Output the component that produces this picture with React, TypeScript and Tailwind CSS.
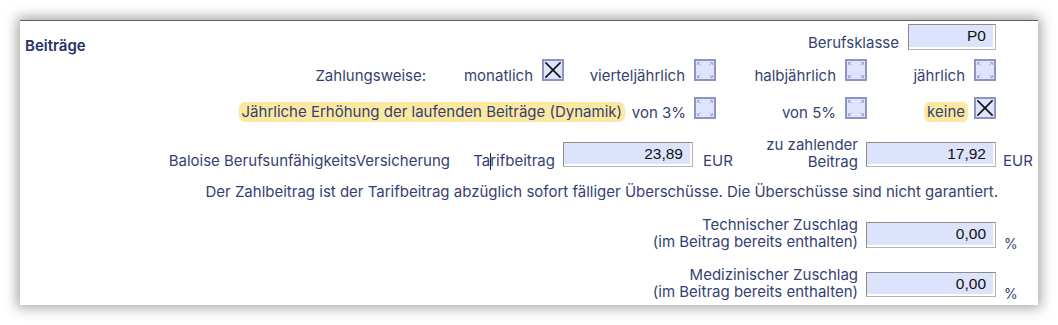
import React from "react";

function Box({ checked }: { checked?: boolean }) {
  return (
    <svg width="22" height="22" viewBox="0 0 22 22" className="shrink-0 block">
      <rect x="1" y="1" width="20" height="20" fill="#dfe4fc" stroke="#8d94c4" strokeWidth="2" />
      {checked ? (
        <g stroke="#111" strokeWidth="1.7" strokeLinecap="square">
          <line x1="4" y1="4" x2="18" y2="18" />
          <line x1="18" y1="4" x2="4" y2="18" />
        </g>
      ) : (
        <g stroke="#a2a8d2" strokeWidth="1" fill="none">
          <path d="M3.5 6 L3.5 3.5 L6 3.5 M3.5 3.5 L6.5 6.5" />
          <path d="M18.5 6 L18.5 3.5 L16 3.5 M18.5 3.5 L15.5 6.5" />
          <path d="M3.5 16 L3.5 18.5 L6 18.5 M3.5 18.5 L6.5 15.5" />
          <path d="M18.5 16 L18.5 18.5 L16 18.5 M18.5 18.5 L15.5 15.5" />
        </g>
      )}
    </svg>
  );
}

function Field({ value, className }: { value: string; className: string }) {
  return (
    <div
      className={
        "shrink-0 flex border border-[#b4b4b4] border-t-[#8c8c8c] border-l-[#8c8c8c] bg-white pr-[2px] pb-[2px] " +
        className
      }
    >
      <div className="flex-1 flex items-center justify-end bg-[#dde3fa] pr-[7px] text-[15.5px] text-[#111] [font-family:'Liberation_Sans',Arial,sans-serif]">
        {value}
      </div>
    </div>
  );
}

export default function App() {
  return (
    <div className="w-[1058px] h-[325px] bg-white pt-[20px] pl-[20px] [font-family:Inter,sans-serif]">
      <div className="w-[1018px] h-[285px] bg-white border-t border-[#5e5e5e] shadow-[0_0_12px_3px_rgba(0,0,0,0.35)] pt-[3px] flex flex-col text-[15px] text-[#363f72]">
        {/* Row 1 */}
        <div className="flex items-start h-[26px]">
          <div className="w-[400px] pl-[5px] mt-[13px] leading-[18px] font-semibold text-[#28316a]">Beiträge</div>
          <div className="w-[488px] text-right pr-[9px] mt-[10px] leading-[18px]">Berufsklasse</div>
          <Field value="P0" className="w-[88px] h-[26px]" />
        </div>

        {/* Row 2 */}
        <div className="flex items-center h-[22px] mt-[9px] leading-[18px]">
          <div className="w-[406px] text-right pt-[11px]">Zahlungsweise:</div>
          <div className="w-[138px] flex justify-end items-center gap-[9px]">
            <span className="pt-[11px]">monatlich</span>
            <Box checked />
          </div>
          <div className="w-[152px] flex justify-end items-center gap-[9px]">
            <span className="pt-[11px]">vierteljährlich</span>
            <Box />
          </div>
          <div className="w-[151px] flex justify-end items-center gap-[9px]">
            <span className="pt-[11px]">halbjährlich</span>
            <Box />
          </div>
          <div className="w-[129px] flex justify-end items-center gap-[9px]">
            <span className="pt-[11px]">jährlich</span>
            <Box />
          </div>
        </div>

        {/* Row 3 */}
        <div className="flex items-center h-[22px] mt-[16px] leading-[18px]">
          <div className="w-[605px] flex justify-end pt-[8px]">
            <span className="bg-[#fbe9a1] rounded-[6px] px-[3px] py-[1px]">
              Jährliche Erhöhung der laufenden Beiträge (Dynamik)
            </span>
          </div>
          <div className="w-[91px] flex justify-end items-center gap-[8px]">
            <span className="pt-[9px]">von 3%</span>
            <Box />
          </div>
          <div className="w-[151px] flex justify-end items-center gap-[9px]">
            <span className="pt-[9px]">von 5%</span>
            <Box />
          </div>
          <div className="w-[129px] flex justify-end items-center gap-[6px]">
            <span className="mt-[8px] bg-[#fbe9a1] rounded-[6px] px-[3px] py-[1px]">keine</span>
            <Box checked />
          </div>
        </div>

        {/* Row 4 */}
        <div className="flex items-end mt-[17px]">
          <div className="w-[430px] shrink-0 text-right leading-[18px]">Baloise BerufsunfähigkeitsVersicherung</div>
          <div className="w-[113px] shrink-0 text-right pr-[8px] leading-[18px]">
            Ta<span className="inline-block w-px h-[17px] bg-[#222] -mr-px align-[-4px]" />rifbeitrag
          </div>
          <Field value="23,89" className="w-[130px] h-[25px] mb-[3px]" />
          <div className="w-[173px] shrink-0 flex items-end justify-between">
            <span className="pl-[10px] leading-[18px]">EUR</span>
            <span className="text-right pr-[8px] leading-[17px]">
              zu zahlender
              <br />
              Beitrag
            </span>
          </div>
          <Field value="17,92" className="w-[130px] h-[25px] mb-[3px]" />
          <span className="shrink-0 pl-[7px] leading-[18px]">EUR</span>
        </div>

        {/* Row 5 */}
        <div className="mt-[13px] w-[978px] text-right leading-[18px]">
          Der Zahlbeitrag ist der Tarifbeitrag abzüglich sofort fälliger Überschüsse. Die Überschüsse sind nicht garantiert.
        </div>

        {/* Row 6 */}
        <div className="flex items-end mt-[15px]">
          <div className="w-[846px] shrink-0 text-right pr-[8px] leading-[17px]">
            Technischer Zuschlag
            <br />
            (im Beitrag bereits enthalten)
          </div>
          <Field value="0,00" className="w-[130px] h-[26px] mb-[2px]" />
          <span className="shrink-0 pl-[8px] text-[14px] leading-[16px] -mb-[2px]">%</span>
        </div>

        {/* Row 7 */}
        <div className="flex items-end mt-[16px]">
          <div className="w-[846px] shrink-0 text-right pr-[8px] leading-[17px]">
            Medizinischer Zuschlag
            <br />
            (im Beitrag bereits enthalten)
          </div>
          <Field value="0,00" className="w-[130px] h-[25px] mb-[3px]" />
          <span className="shrink-0 pl-[8px] text-[14px] leading-[16px] -mb-[2px]">%</span>
        </div>
      </div>
    </div>
  );
}
